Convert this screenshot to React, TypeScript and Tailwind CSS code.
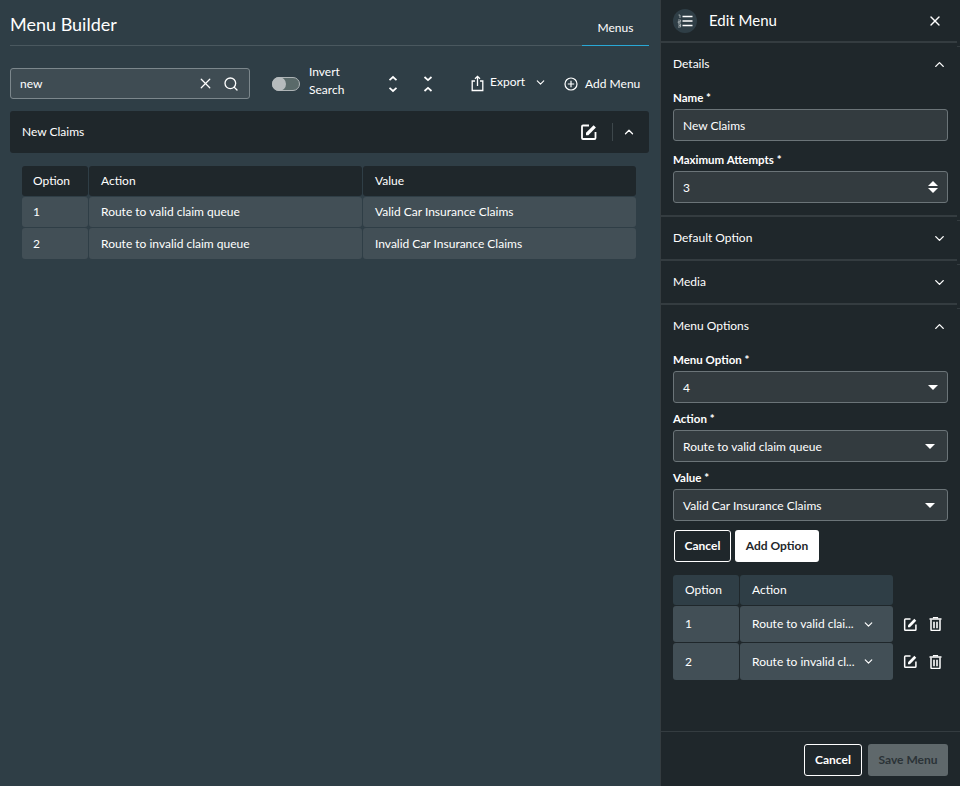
import React from "react";
import { X, Search, ChevronUp, ChevronDown } from "lucide-react";

function UnfoldMore() {
  return (
    <svg width="14" height="20" viewBox="0 0 14 20" fill="none" stroke="white" strokeWidth="1.7" className="block">
      <path d="M3.5 6.2 7 3l3.5 3.2M3.5 13.8 7 17l3.5-3.2" />
    </svg>
  );
}
function UnfoldLess() {
  return (
    <svg width="14" height="20" viewBox="0 0 14 20" fill="none" stroke="white" strokeWidth="1.7" className="block">
      <path d="M3.5 3 7 6.2 10.5 3M3.5 17 7 13.8l3.5 3.2" />
    </svg>
  );
}
function ShareIcon() {
  return (
    <svg width="15" height="17" viewBox="0 0 15 17" fill="none" stroke="white" strokeWidth="1.3" className="block">
      <path d="M5 6H2.2v9.5h10.6V6H10" />
      <path d="M7.5 11V1.5M5 3.8l2.5-2.5L10 3.8" />
    </svg>
  );
}
function AddCircle() {
  return (
    <svg width="14" height="14" viewBox="0 0 14 14" fill="none" stroke="white" strokeWidth="1.2" className="block">
      <circle cx="7" cy="7" r="6" />
      <path d="M7 3.8v6.4M3.8 7h6.4" />
    </svg>
  );
}
function NumberedList() {
  return (
    <svg width="16" height="14" viewBox="0 0 16 14" fill="none" className="block">
      <path d="M5.5 2.5h10M5.5 7h10M5.5 11.5h10" stroke="white" strokeWidth="1.5" />
      <path d="M1.5 1h1.5v3M1 6h2.6v1.6H1.2v1.2h2.5M1 10h2.6v3H1M1.6 11.5h2" stroke="#c9ced0" strokeWidth="0.7" />
    </svg>
  );
}
function EditIcon({ size = 18 }: { size?: number }) {
  return (
    <svg width={size} height={size} viewBox="0 0 18 18" fill="none" className="block">
      <path d="M9 2.5H3a1 1 0 0 0-1 1v11.5a1 1 0 0 0 1 1h11.5a1 1 0 0 0 1-1V9" stroke="white" strokeWidth="1.8" />
      <path d="M6 12.2V9.8L13.6 2.2l2.3 2.3L8.3 12.2z" fill="white" />
    </svg>
  );
}
function TrashIcon() {
  return (
    <svg width="13" height="14" viewBox="0 0 13 14" fill="none" className="block">
      <path d="M0.5 2h12" stroke="white" strokeWidth="1.5" />
      <path d="M4.5 1.6V.7h4v.9" stroke="white" strokeWidth="1.2" />
      <path d="M2 2.5v10a1 1 0 0 0 1 1h7a1 1 0 0 0 1-1v-10" stroke="white" strokeWidth="1.5" />
      <path d="M5 4.8v6.5M8 4.8v6.5" stroke="white" strokeWidth="1.6" />
    </svg>
  );
}
function Caret() {
  return <span className="block w-0 h-0 border-l-[5px] border-r-[5px] border-t-[5px] border-l-transparent border-r-transparent border-t-white" />;
}
function Field({ label, value, right, near }: { label: string; value: string; right: React.ReactNode; near?: boolean }) {
  return (
    <div className="flex flex-col">
      <div className="h-[20px] flex items-center text-[11.5px] font-bold text-white">{label}</div>
      <div className={"mt-[1px] h-[32px] rounded-[3px] border border-[#6b7478] bg-[#333b3f] flex items-center justify-between pl-[9px] text-[12px] text-white " + (near ? "pr-[9px]" : "pr-[12px]")}>
        <span className="pt-[2px]">{value}</span>
        {right}
      </div>
    </div>
  );
}
function Section({ title, open, children }: { title: string; open?: boolean; children?: React.ReactNode }) {
  return (
    <div className="border-t-2 border-[#343c40] mr-[3px] relative">
      <span className="absolute -right-[3px] top-[3px] w-[3px] h-[1px] bg-[#343c40]" />
      <div className="h-[42px] flex items-center justify-between pl-[12px] pr-[10px] text-[12px] text-white">
        <span>{title}</span>
        {open ? <ChevronUp size={15} color="white" strokeWidth={2.2} /> : <ChevronDown size={15} color="white" strokeWidth={2.2} />}
      </div>
      {children}
    </div>
  );
}
function Cell({ children, dark, className = "" }: { children: React.ReactNode; dark?: boolean; className?: string }) {
  return (
    <div className={"flex items-center rounded-[3px] text-[12px] text-white " + (dark ? "bg-[#1f272b] " : "bg-[#424f56] ") + className}>
      {children}
    </div>
  );
}

export default function App() {
  return (
    <div className="w-[960px] h-[786px] flex overflow-hidden bg-[#2f3e46] text-white" style={{ fontFamily: "Lato, sans-serif" }}>
      <main className="w-[660px] shrink-0 pl-[10px] pr-[11px]">
        <header className="h-[46px] flex justify-between border-b border-[#4a585f]">
          <h1 className="text-[18px] leading-[24px] font-normal mt-[12px]">Menu Builder</h1>
          <div className="w-[67px] h-[46px] flex items-center justify-center pt-[10px] text-[12px] border-b border-[#29a8d6]">Menus</div>
        </header>
        <div className="mt-[22px] h-[31px] flex items-center">
          <div className="w-[240px] h-[31px] rounded-[3px] border border-[#7c878c] bg-[#3f4c53] flex items-center pl-[9px] pr-[10px] text-[12px]">
            <span className="flex-1">new</span>
            <X size={17} color="white" strokeWidth={1.8} className="mr-[9px]" />
            <Search size={16} color="white" strokeWidth={2} />
          </div>
          <div className="ml-[22px] w-[28px] h-[14px] relative rounded-full bg-[#5a6a6a] border border-[#aeb4b6] shrink-0">
            <div className="absolute -left-[1px] -top-[1px] w-[14px] h-[14px] rounded-full bg-[#b6bbbd]" />
          </div>
          <div className="ml-[9px] w-[60px] text-[12px] leading-[18px] -mt-[6px]">Invert<br />Search</div>
          <div className="ml-[17px] w-[14px]"><UnfoldMore /></div>
          <div className="ml-[21px] w-[14px]"><UnfoldLess /></div>
          <div className="ml-[35px] flex items-center">
            <ShareIcon />
            <span className="ml-[5px] text-[12px] -mt-[3px]">Export</span>
            <ChevronDown size={13} color="white" strokeWidth={2} className="ml-[9px] -mt-[3px]" />
          </div>
          <div className="ml-[17px] flex items-center">
            <AddCircle />
            <span className="ml-[7px] text-[12px]">Add Menu</span>
          </div>
        </div>
        <div className="mt-[12px] h-[42px] rounded-[3px] bg-[#1f272b] flex items-center pl-[12px] pr-[13px] text-[12px]">
          <span className="flex-1">New Claims</span>
          <EditIcon size={18} />
          <div className="w-px h-[18px] bg-[#3d474b] mr-[9px] ml-[14px]" />
          <ChevronUp size={14} color="white" strokeWidth={2.2} />
        </div>
        <div className="mt-[13px] mx-[12px] w-[614px] grid grid-cols-[66px_273px_273px] gap-[1px] grid-rows-[30px_30px_31px]">
          <Cell dark className="pl-[11px]">Option</Cell>
          <Cell dark className="pl-[12px]">Action</Cell>
          <Cell dark className="pl-[12px]">Value</Cell>
          <Cell className="pl-[11px]">1</Cell>
          <Cell className="pl-[12px]">Route to valid claim queue</Cell>
          <Cell className="pl-[12px]">Valid Car Insurance Claims</Cell>
          <Cell className="pl-[11px]">2</Cell>
          <Cell className="pl-[12px]">Route to invalid claim queue</Cell>
          <Cell className="pl-[12px]">Invalid Car Insurance Claims</Cell>
        </div>
      </main>
      <aside className="w-[300px] h-[786px] shrink-0 border-l border-[#343c40] bg-[#1f272b] flex flex-col">
        <div className="h-[41px] flex items-center pl-[12px] pr-[17px] shrink-0">
          <div className="w-[24px] h-[24px] rounded-full bg-[#2f3e46] flex items-center justify-center">
            <NumberedList />
          </div>
          <span className="ml-[12px] flex-1 text-[15px]">Edit Menu</span>
          <X size={16} color="white" strokeWidth={2} />
        </div>
        <Section title="Details" open>
          <div className="pl-[12px] pr-[9px] pb-[12px] flex flex-col gap-[9px] mt-[3px]">
            <Field label="Name *" value="New Claims" right={null} />
            <Field label="Maximum Attempts *" value="3" near right={
              <span className="flex flex-col gap-[2px]">
                <span className="block w-0 h-0 border-l-[5px] border-r-[5px] border-b-[5px] border-l-transparent border-r-transparent border-b-white" />
                <Caret />
              </span>
            } />
          </div>
        </Section>
        <Section title="Default Option" />
        <Section title="Media" />
        <Section title="Menu Options" open>
          <div className="pl-[12px] pr-[9px] flex flex-col gap-[6px] mt-[3px]">
            <Field label="Menu Option *" value="4" near right={<Caret />} />
            <Field label="Action *" value="Route to valid claim queue" right={<Caret />} />
            <Field label="Value *" value="Valid Car Insurance Claims" right={<Caret />} />
          </div>
          <div className="pl-[13px] mt-[9px] flex gap-[4px]">
            <button className="w-[57px] h-[32px] rounded-[3px] border border-white text-[12px] font-bold text-white">Cancel</button>
            <button className="w-[84px] h-[32px] rounded-[3px] bg-white text-[12px] font-bold text-[#1f272b]">Add Option</button>
          </div>
          <div className="pl-[12px] mt-[13px] grid grid-cols-[66px_153px_50px] gap-[1px] grid-rows-[30px_36px_37px]">
            <Cell className="pl-[12px] !bg-[#2f3e46]">Option</Cell>
            <Cell className="pl-[12px] !bg-[#2f3e46]">Action</Cell>
            <div />
            <Cell className="pl-[12px]">1</Cell>
            <Cell className="pl-[12px] pr-[18px] justify-between"><span>Route to valid clai...</span><ChevronDown size={13} color="white" strokeWidth={2.2} /></Cell>
            <div className="flex items-center pl-[9px] gap-[11px]"><EditIcon size={15} /><TrashIcon /></div>
            <Cell className="pl-[12px]">2</Cell>
            <Cell className="pl-[12px] pr-[18px] justify-between"><span>Route to invalid cl...</span><ChevronDown size={13} color="white" strokeWidth={2.2} /></Cell>
            <div className="flex items-center pl-[9px] gap-[11px]"><EditIcon size={15} /><TrashIcon /></div>
          </div>
        </Section>
        <div className="mt-auto h-[55px] border-t border-[#343c40] flex items-start justify-end gap-[6px] pt-[12px] pr-[12px]">
          <button className="w-[58px] h-[32px] rounded-[3px] border border-white text-[12px] font-bold text-white">Cancel</button>
          <button className="w-[80px] h-[32px] rounded-[3px] bg-[#5f686b] text-[12px] font-bold text-[#2b3337]">Save Menu</button>
        </div>
      </aside>
    </div>
  );
}
